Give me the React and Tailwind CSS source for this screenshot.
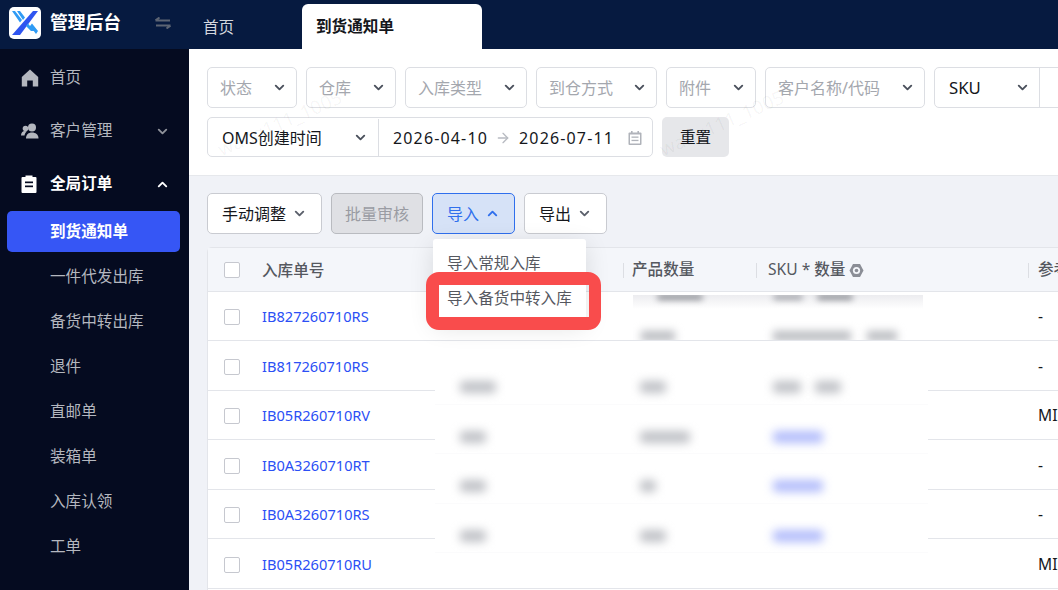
import React from "react";
import { ChevronDown, ChevronUp, ArrowRight } from "lucide-react";

const Chev = ({ up, className = "" }) => {
  const I = up ? ChevronUp : ChevronDown;
  return <I size={15} strokeWidth={3} className={className} />;
};

const Logo = () => (
  <div className="w-[32px] h-[32px] rounded-[5px] bg-white flex items-center justify-center shrink-0">
    <svg width="28" height="26" viewBox="0 0 28 26">
      <path d="M22 1h5L9 25H1z" fill="#2f55f0" />
      <path d="M1 1h3l7 9-2 2.5z M6 1h3l5 6.5-2 2.5z" fill="#2f9bf5" />
      <path d="M15 16l2-2.5 6 7.5h-3z M19 16l2-2.5 6 7.5 -2 3z" fill="#2f9bf5" />
    </svg>
  </div>
);

const Swap = () => (
  <svg width="16" height="12" viewBox="0 0 16 12" fill="none" stroke="#5c6473" strokeWidth="2">
    <path d="M0.5 3.5H15M0.5 3.5L4.5 0.5" />
    <path d="M15.5 8.5H1M15.5 8.5L11.5 11.5" />
  </svg>
);

const Home = () => (
  <svg width="18" height="18" viewBox="0 0 18 18" fill="#b4b7bf">
    <path d="M9 0.5L17.2 8v9.5h-5.4v-6H6.2v6H0.8V8z" />
  </svg>
);
const Users = () => (
  <svg width="18" height="16" viewBox="0 0 18 16" fill="#b4b7bf">
    <circle cx="11" cy="4.5" r="4" />
    <circle cx="4.5" cy="5.5" r="2.8" />
    <path d="M5 15.5c0-4 2.5-6 6-6s6.500 2 6.500 6z" />
    <path d="M0 12.500c0-2.500 1.500-4.500 4-4.500 .8 0 1.500.2 2 .5-1.500 1-2.300 2.500-2.500 4z" />
  </svg>
);
const Clip = () => (
  <svg width="16" height="18" viewBox="0 0 16 18">
    <path d="M1.500 2h3V.5h7V2h3a1 1 0 0 1 1 1v14a1 1 0 0 1-1 1h-13a1 1 0 0 1-1-1V3a1 1 0 0 1 1-1z" fill="#fff" />
    <rect x="4" y="6.500" width="8" height="1.700" fill="#050b20" />
    <rect x="4" y="10.500" width="8" height="1.700" fill="#050b20" />
  </svg>
);
const Cal = () => (
  <svg width="14" height="14" viewBox="0 0 14 14">
    <rect x="0.500" y="1.500" width="13" height="12.500" rx="1" fill="#b0b3ba" />
    <rect x="3" y="0" width="1.600" height="3" fill="#b0b3ba" />
    <rect x="9.400" y="0" width="1.600" height="3" fill="#b0b3ba" />
    <rect x="2" y="3.500" width="10" height="9" fill="#fff" />
    <rect x="3.500" y="5.500" width="7" height="1.300" fill="#b0b3ba" />
    <rect x="3.500" y="8.800" width="7" height="1.300" fill="#b0b3ba" />
  </svg>
);
const Hex = () => (
  <svg width="15" height="15" viewBox="0 0 15 15" fill="none">
    <path d="M4 1h7l3.500 6.500L11 14H4L.5 7.500z" fill="#8b8e96" />
    <circle cx="7.500" cy="7.500" r="3.600" fill="#f4f6fa" />
    <circle cx="7.500" cy="7.500" r="1.800" fill="#8b8e96" />
  </svg>
);

const Watermark = ({ className }) => (
  <span className={`absolute -rotate-[24deg] text-[19px] text-[#000]/[0.045] pointer-events-none whitespace-nowrap ${className}`}>
    wang111_1005
  </span>
);

const Select = ({ label, w, dark }) => (
  <div className={`${w} h-[41px] shrink-0 border border-[#dcdee3] rounded-[5px] flex items-center justify-between pl-[12px] pr-[9px] bg-white text-[16px]`}>
    <span className={dark ? "text-[#15171c]" : "text-[#a4a7ae]"}>{label}</span>
    <Chev className="text-[#4a505c]" />
  </div>
);

const NavItem = ({ icon, label, chev, active, h = "h-[53px]" }) => (
  <div className={`${h} flex items-center pl-[21px] pr-[19px] pt-[1px] shrink-0 ${active ? "text-white font-bold" : "text-[#b4b7bf]"}`}>
    <span className="w-[29px] flex">{icon}</span>
    <span className="flex-1">{label}</span>
    {chev === "down" && <Chev className="text-[#8f929a]" />}
    {chev === "up" && <Chev up className="text-white" />}
  </div>
);

const Sub = ({ label }) => (
  <div className="h-[45px] shrink-0 flex items-center pl-[50px] text-[#b4b7bf]">{label}</div>
);

const Btn = ({ children, className }) => (
  <div className={`h-[41px] shrink-0 rounded-[5px] border flex items-center justify-center gap-[6px] text-[16px] ${className}`}>
    {children}
  </div>
);

const rows = [
  ["IB827260710RS", "-", "h-[49px]"],
  ["IB817260710RS", "-", "h-[50px]"],
  ["IB05R260710RV", "MII", "h-[49px]"],
  ["IB0A3260710RT", "-", "h-[50px]"],
  ["IB0A3260710RS", "-", "h-[49px]"],
  ["IB05R260710RU", "MII", "h-[50px]"],
];

const Check = () => <span className="block w-[16px] h-[16px] border border-[#c6c8cf] rounded-[2px] bg-white" />;

const blobRows = [
  ["w-[36px]", "w-[26px]", ["w-[28px]", "w-[26px]"], false],
  ["w-[26px]", "w-[50px]", ["w-[50px]"], true],
  ["w-[26px]", "w-[16px]", ["w-[50px]"], true],
  ["w-[26px]", "w-[26px]", ["w-[50px]"], true],
];

export default function App() {
  return (
    <div className="w-[1058px] h-[590px] overflow-hidden flex flex-col relative text-[15.600px] font-['Noto_Sans','Noto_Sans_CJK_SC',sans-serif] bg-[#f0f2f7]">
      {/* top bar */}
      <header className="h-[49px] shrink-0 bg-[#061a40] flex items-end">
        <div className="w-[189px] h-full shrink-0 flex items-center pl-[9px] pb-[3px]">
          <Logo />
          <span className="ml-[9px] text-white font-bold text-[17.800px] leading-none">管理后台</span>
          <span className="ml-[34px] flex"><Swap /></span>
        </div>
        <div className="w-[113px] h-[45px] shrink-0 flex items-center pl-[14px] pt-[2px] text-[#d4d7de]">首页</div>
        <div className="w-[180px] h-[45px] shrink-0 bg-white rounded-t-[6px] flex items-center pl-[14px] pt-[1px] font-bold text-[#15171c]">到货通知单</div>
      </header>

      <div className="flex-1 flex min-h-0">
        {/* sidebar */}
        <aside className="w-[189px] shrink-0 bg-[#050b20] flex flex-col pt-[2px] overflow-hidden">
          <NavItem icon={<Home />} label="首页" />
          <NavItem icon={<Users />} label="客户管理" chev="down" />
          <NavItem icon={<Clip />} label="全局订单" chev="up" active />
          <div className="ml-[7px] w-[173px] mt-[1px] mb-[2px] h-[41px] shrink-0 rounded-[5px] bg-[#3656f5] flex items-center pl-[43px] text-white font-bold">到货通知单</div>
          <Sub label="一件代发出库" />
          <Sub label="备货中转出库" />
          <Sub label="退件" />
          <Sub label="直邮单" />
          <Sub label="装箱单" />
          <Sub label="入库认领" />
          <Sub label="工单" />
          <div className="pl-[21px] mt-[21px] shrink-0 flex"><Home /></div>
        </aside>

        {/* main */}
        <main className="flex-1 min-w-0 flex flex-col relative overflow-hidden">
          {/* filters */}
          <section className="h-[127px] shrink-0 bg-white border-b border-[#e6e8ec] pt-[18px] pl-[18px] flex flex-col gap-[9px]">
            <div className="flex gap-[9px]">
              <Select label="状态" w="w-[90px]" />
              <Select label="仓库" w="w-[90px]" />
              <Select label="入库类型" w="w-[122px]" />
              <Select label="到仓方式" w="w-[121px]" />
              <Select label="附件" w="w-[90px]" />
              <Select label="客户名称/代码" w="w-[160px]" />
              <div className="w-[200px] h-[41px] shrink-0 border border-[#dcdee3] rounded-[5px] flex items-center bg-white">
                <div className="w-[105px] h-full border-r border-[#dcdee3] flex items-center justify-between pl-[14px] pr-[9px] text-[#15171c] text-[16.800px]">
                  SKU
                  <Chev className="text-[#4a505c]" />
                </div>
              </div>
            </div>
            <div className="flex gap-[9px]">
              <div className="w-[446px] h-[40px] shrink-0 border border-[#dcdee3] rounded-[5px] flex items-center text-[#15171c] text-[16px] pt-[1px]">
                <div className="w-[171px] h-full border-r border-[#dcdee3] flex items-center justify-between pl-[14px] pr-[10px] shrink-0">
                  OMS创建时间
                  <Chev className="text-[#4a505c]" />
                </div>
                <span className="ml-[14px] tracking-[1.150px]">2026-04-10</span>
                <span className="ml-[7px] mr-[8px] flex"><ArrowRight size={16} strokeWidth={2} className="text-[#b8bbc2]" /></span>
                <span className="tracking-[1.150px]">2026-07-11</span>
                <span className="ml-[14px] flex"><Cal /></span>
              </div>
              <div className="w-[67px] h-[40px] shrink-0 rounded-[5px] bg-[#e6e7ea] flex items-center justify-center pt-[1px] text-[#15171c]">重置</div>
            </div>
          </section>

          {/* toolbar */}
          <section className="flex gap-[9px] pl-[18px] pt-[17px] relative z-20 shrink-0">
            <Btn className="w-[115px] bg-white border-[#c9cbd1] text-[#15171c]">手动调整<Chev className="text-[#5b606b]" /></Btn>
            <Btn className="w-[92px] bg-[#dfe0e4] border-[#b9bbc0] text-[#9a9ca3]">批量审核</Btn>
            <div className="relative w-[83px] shrink-0">
              <Btn className="w-full bg-[#d6e2f7] border-[#2f6fed] text-[#2f6fed]">导入<Chev up /></Btn>
              <div className="absolute left-[1px] top-full mt-[5px] w-[153px] h-[82px] bg-white rounded-[3px] shadow-[0_6px_24px_rgba(0,0,0,0.12)] pl-[14px] text-[#55585f] flex flex-col">
                <div className="h-[48px] flex items-center pt-[1px] shrink-0">导入常规入库</div>
                <div className="h-[24px] flex items-center shrink-0 whitespace-nowrap">导入备货中转入库</div>
              </div>
              <div className="absolute left-[-6px] top-[79px] w-[175px] h-[58px] border-[13px] border-r-[12px] border-[#f94c4c] rounded-[13px] pointer-events-none" />
            </div>
            <Btn className="w-[83px] bg-white border-[#c9cbd1] text-[#15171c]">导出<Chev className="text-[#5b606b]" /></Btn>
          </section>

          {/* table */}
          <section className="mt-[13px] ml-[18px] flex-1 min-h-0 relative z-10 bg-white border-l border-t border-[#e3e5ea] rounded-tl-[5px]">
            <div className="h-[44px] bg-[#f4f6fa] border-b border-[#e3e5ea] grid grid-cols-[54px_361px_133px_272px_40px] items-center font-medium text-[#55585f] pt-[1px]">
              <div className="pl-[16px] flex"><Check /></div>
              <div className="pt-[1px]">入库单号</div>
              <div className="border-l border-[#dcdee3] h-[15px] flex items-center pl-[8px] whitespace-nowrap">产品数量</div>
              <div className="border-l border-[#dcdee3] h-[15px] flex items-center pl-[11px] gap-[4px] whitespace-nowrap font-normal"><span>SKU * </span><span className="font-medium">数量</span><Hex /></div>
              <div className="border-l border-[#dcdee3] h-[15px] flex items-center pl-[9px] whitespace-nowrap">参考</div>
            </div>
            {rows.map(([id, ref, h]) => (
              <div key={id} className={`${h} pt-[2px] border-b border-[#e3e5ea] grid grid-cols-[54px_361px_133px_272px_40px] items-center bg-white`}>
                <div className="pl-[16px] flex"><Check /></div>
                <div className="text-[#2b4ff5] text-[14.600px]">{id}</div>
                <div />
                <div />
                <div className="pl-[10px] text-[#15171c] whitespace-nowrap">{ref}</div>
              </div>
            ))}

            {/* blurred first row */}
            <div className="absolute left-[425px] top-[47px] w-[290px] h-[45px] bg-white overflow-hidden">
              <div className="h-[14px] bg-gradient-to-b from-[#ececef] to-white" />
              <div className="absolute left-[24px] top-[-1px] w-[46px] h-[6px] rounded-full bg-[#8f9197] blur-[3px]" />
              <div className="absolute left-[140px] top-[-1px] w-[30px] h-[6px] rounded-full bg-[#a4a6ac] blur-[3px]" />
              <div className="absolute left-[184px] top-[-1px] w-[36px] h-[6px] rounded-full bg-[#8f9197] blur-[3px]" />
              <div className="absolute left-[8px] top-[36px] w-[34px] h-[10px] bg-[#b9bbc0] blur-[4px]" />
              <div className="absolute left-[140px] top-[36px] w-[78px] h-[10px] bg-[#b9bbc0] blur-[4px]" />
              <div className="absolute left-[234px] top-[36px] w-[30px] h-[10px] bg-[#b9bbc0] blur-[4px]" />
            </div>

            {/* blurred rows */}
            <div className="absolute left-[227px] top-[107px] w-[493px] h-[220px] bg-white flex flex-col">
              {blobRows.map(([a, b, c, blue], i) => (
                <div key={i} className="h-[49.500px] shrink-0 border-b border-[#fbfbfc] flex items-center pl-[25px] pt-[16px]">
                  <span className="w-[180px] shrink-0 flex">
                    <span className={`block ${a} h-[12px] rounded bg-[#c0c2c7] blur-[5px]`} />
                  </span>
                  <span className="w-[133px] shrink-0 flex">
                    <span className={`block ${b} h-[12px] rounded bg-[#c0c2c7] blur-[5px]`} />
                  </span>
                  <span className="flex gap-[14px]">
                    {c.map((w, j) => (
                      <span key={j} className={`block ${w} h-[12px] shrink-0 rounded blur-[5px] ${blue ? "bg-[#b3bdfb]" : "bg-[#c0c2c7]"}`} />
                    ))}
                  </span>
                </div>
              ))}
            </div>
          </section>

          <Watermark className="left-[24px] top-[60px]" />
          <Watermark className="left-[466px] top-[60px]" />
          <Watermark className="left-[24px] top-[240px]" />
          <Watermark className="left-[466px] top-[240px]" />
          <Watermark className="left-[24px] top-[420px]" />
          <Watermark className="left-[466px] top-[420px]" />
        </main>
      </div>
    </div>
  );
}
